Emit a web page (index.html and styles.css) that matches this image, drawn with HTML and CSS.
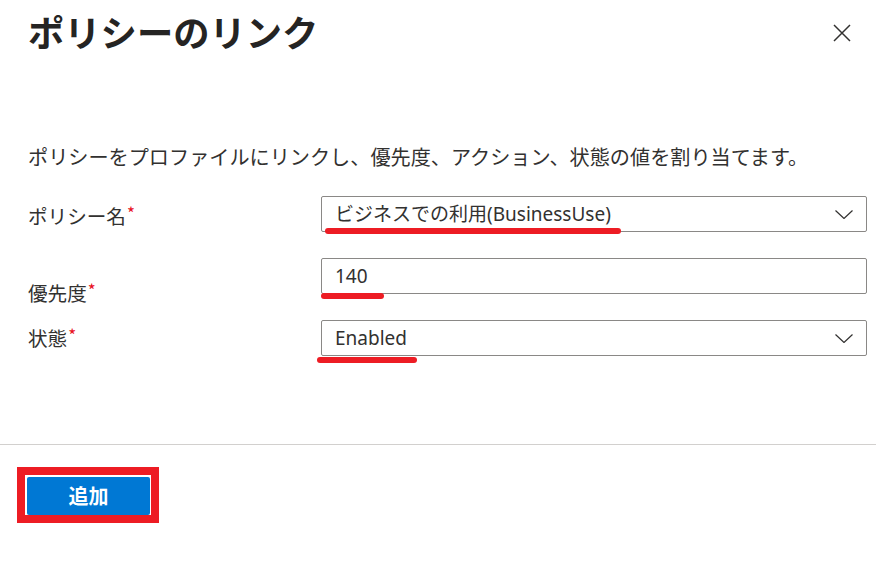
FILE: index.html
```html
<!DOCTYPE html>
<html lang="ja">
<head>
<meta charset="utf-8">
<title>ポリシーのリンク</title>
<link rel="stylesheet" href="styles.css">
</head>
<body>
<div class="panel">
  <header class="header">
    <h1 class="title">ポリシーのリンク</h1>
    <button class="close" aria-label="閉じる">
      <svg width="18" height="18" viewBox="0 0 18 18"><path d="M1 1 L17 17 M17 1 L1 17" stroke="#323130" stroke-width="1.5" fill="none"/></svg>
    </button>
  </header>
  <p class="desc">ポリシーをプロファイルにリンクし、優先度、アクション、状態の値を割り当てます。</p>
  <div class="form">
    <div class="row">
      <label class="label label-1">ポリシー名<span class="req">*</span></label>
      <div class="field select">
        <span class="value">ビジネスでの利用(BusinessUse)</span>
        <svg class="chev" width="18" height="9" viewBox="0 0 18 9"><path d="M0.5 0.5 L9 8.5 L17.5 0.5" stroke="#323130" stroke-width="1.2" fill="none"/></svg>
        <span class="mark mark-1"></span>
      </div>
    </div>
    <div class="row">
      <label class="label label-2">優先度<span class="req">*</span></label>
      <div class="field">
        <span class="value">140</span>
        <span class="mark mark-2"></span>
      </div>
    </div>
    <div class="row">
      <label class="label label-3">状態<span class="req">*</span></label>
      <div class="field select">
        <span class="value">Enabled</span>
        <svg class="chev" width="18" height="9" viewBox="0 0 18 9"><path d="M0.5 0.5 L9 8.5 L17.5 0.5" stroke="#323130" stroke-width="1.2" fill="none"/></svg>
        <span class="mark mark-3"></span>
      </div>
    </div>
  </div>
  <hr class="divider">
  <div class="footer">
    <div class="highlight">
      <button class="primary">追加</button>
    </div>
  </div>
</div>
</body>
</html>
```

FILE: styles.css
```css
* { box-sizing: border-box; }
html, body { margin: 0; padding: 0; background: #fff; }
body {
  font-family: "Noto Sans", "Noto Sans CJK JP", sans-serif;
  color: #323130;
  width: 876px;
  height: 569px;
  overflow: hidden;
}
.panel { width: 876px; }
.header {
  display: flex;
  justify-content: space-between;
  align-items: flex-start;
  padding: 10px 24px 0 28px;
}
.title {
  margin: 0;
  font-family: "Noto Sans CJK JP", sans-serif;
  font-weight: 700;
  font-size: 36.3px;
  line-height: 43px;
  color: #252423;
}
.close {
  border: 0;
  background: none;
  padding: 0;
  margin-top: 14px;
  margin-right: 1px;
  width: 18px;
  height: 18px;
  display: flex;
}
.desc {
  margin: 90px 0 0 28px;
  font-family: "Noto Sans CJK JP", sans-serif;
  font-size: 20.15px;
  line-height: 28px;
  color: #323130;
  white-space: nowrap;
}
.form {
  margin-top: 25px;
  padding-left: 28px;
  display: flex;
  flex-direction: column;
  gap: 26px;
}
.row {
  display: flex;
  align-items: flex-start;
  height: 36px;
}
.label {
  width: 293px;
  font-family: "Noto Sans CJK JP", sans-serif;
  font-size: 19.6px;
  line-height: 28px;
  color: #323130;
  flex: none;
}
.label-1 { padding-top: 3px; }
.label-2 { padding-top: 18px; }
.label-3 { padding-top: 1px; }
.req {
  color: #e81123;
  font-size: 17px;
  vertical-align: 4px;
  margin-left: 1px;
}
.field {
  position: relative;
  width: 546px;
  height: 36px;
  border: 1px solid #8a8886;
  border-radius: 2px;
  display: flex;
  align-items: center;
  padding: 0 12px 0 13px;
  flex: none;
}
.value {
  flex: 1;
  font-family: "Noto Sans", "Noto Sans CJK JP", sans-serif;
  font-size: 19px;
  line-height: 26px;
  color: #323130;
  white-space: nowrap;
}
.chev { flex: none; margin-right: 1px; }
.mark {
  position: absolute;
  height: 6px;
  background: #ed1c24;
  border-radius: 3px;
}
.mark-1 { left: 3px; top: 31px; width: 296px; }
.mark-2 { left: -1px; top: 34px; width: 63px; }
.mark-3 { left: -5px; top: 36px; width: 100px; }
.divider {
  margin: 88px 0 0 0;
  border: 0;
  border-top: 1px solid #d2d0ce;
  height: 0;
}
.footer {
  padding: 22px 0 0 17px;
}
.highlight {
  display: inline-flex;
  border: 8px solid #ed1c24;
  padding: 2px 1px 0 2px;
  background: #fff;
}
.primary {
  width: 123px;
  height: 38px;
  border: 0;
  border-radius: 2px;
  background: #0078d4;
  color: #fff;
  font-family: "Noto Sans CJK JP", sans-serif;
  font-weight: 700;
  font-size: 20px;
  line-height: 38px;
  padding: 0;
}
```
